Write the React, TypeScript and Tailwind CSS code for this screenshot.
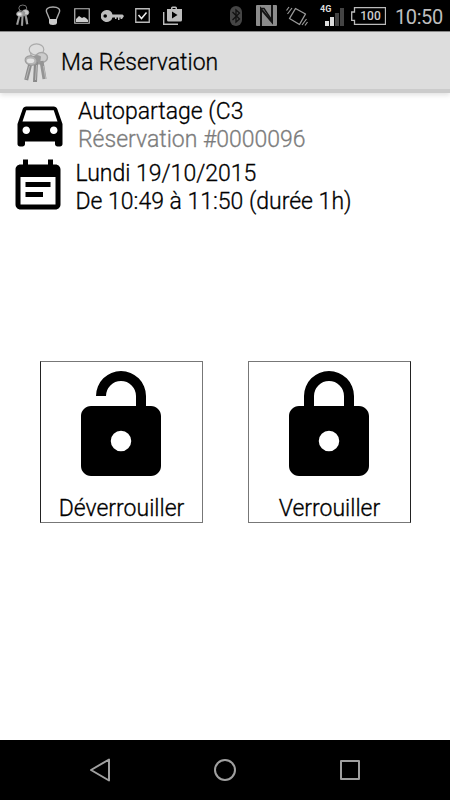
import React from 'react';

interface IconProps {
  className?: string;
}

interface LockButtonProps {
  label: string;
  path: string;
  className?: string;
}

const LOCK_BODY =
  'M18 8H6c-1.1 0-2 .9-2 2v10c0 1.1.9 2 2 2h12c1.1 0 2-.9 2-2V10c0-1.1-.9-2-2-2zm-6 9.05a2.05 2.05 0 1 1 0-4.1 2.05 2.05 0 0 1 0 4.1z';
const OPEN_SHACKLE = 'M7 6a5 5 0 0 1 10 0v2.2h-2V6a3 3 0 0 0-6 0z';
const CLOSED_SHACKLE = 'M7 8.2V6a5 5 0 0 1 10 0v2.2h-2V6a3 3 0 0 0-6 0v2.2z';

function KeysIcon({ className }: IconProps) {
  return (
    <svg className={className} viewBox="0 0 26 42" fill="none">
      <ellipse cx="13.5" cy="7.5" rx="7.3" ry="5.6" stroke="#aaa" strokeWidth="1.2" />
      <path d="M7.5 10l1 6" stroke="#aaa" strokeWidth="1.2" />
      <ellipse cx="18.5" cy="15.5" rx="6" ry="5" fill="#ccc" stroke="#a5a5a5" strokeWidth="1.4" />
      <path d="M18.5 19l3 18" stroke="#949494" strokeWidth="4" />
      <path d="M20.5 24l2.2 13" stroke="#bbb" strokeWidth="1" />
      <path d="M7.5 21L3.2 38" stroke="#8d8d8d" strokeWidth="4" />
      <path d="M6.5 24L3 37" stroke="#b5b5b5" strokeWidth="1" />
      <path d="M10 14.5q4-3 8 0l-1 8h-6z" fill="#999" />
      <path d="M13 20l-1 20" stroke="#8a8a8a" strokeWidth="4" />
      <path d="M13.5 23l-1 15" stroke="#b8b8b8" strokeWidth="1" />
      <ellipse cx="8" cy="18.5" rx="6" ry="4.7" transform="rotate(15 8 18.5)" fill="#b5b5b5" stroke="#999" />
      <ellipse cx="7.5" cy="18.8" rx="3.8" ry="2.3" fill="#e2e2e2" />
    </svg>
  );
}

function StatusBar() {
  return (
    <header className="flex h-[31px] shrink-0 items-center bg-black text-[#bdbdbd]">
      <KeysIcon className="ml-[15px] h-[23px] w-[15px]" />
      <svg className="ml-[15px] h-5 w-4" viewBox="0 0 16 20" fill="none">
        <path d="M4.5 13L2 7C0 3 3 1 8 1s8 2 6 6l-2.5 6" stroke="#aaa" strokeWidth="1.4" />
        <path d="M4 13h8v3.5Q12 19 8 19t-4-2.5z" fill="#ccc" />
      </svg>
      <svg className="ml-[13px] h-4 w-4" viewBox="0 0 16 16">
        <path d="M.75.75h14.5v14.5H.75z" fill="none" stroke="#bbb" strokeWidth="1.2" />
        <path d="M2 14V11l3-3 3 2 2-1 2 1 2 2v2z" fill="#ccc" />
      </svg>
      <svg className="ml-[11px] h-3 w-[23px]" viewBox="0 0 23 12" fill="#bdbdbd">
        <path fillRule="evenodd" d="M6 0a6 6 0 1 0 5.5 7.5H14V9h1.5V7.5H17V10h1.5V7.5h1V9H21l2-3-1.5-1.5h-10A6 6 0 0 0 6 0zM4.2 4.2a1.8 1.8 0 1 1 0 3.6 1.8 1.8 0 0 1 0-3.6z" />
      </svg>
      <svg className="ml-[11px] h-[15px] w-[15px]" viewBox="0 0 15 15" fill="none">
        <path d="M.75.75h13.5v13.5H.75z" stroke="#bbb" strokeWidth="1.3" />
        <path d="M3.5 7l3 3.5 5-6" stroke="#eee" strokeWidth="1.5" />
      </svg>
      <svg className="-mt-px ml-[13px] h-[19px] w-[19px]" viewBox="0 0 19 19" fill="#bdbdbd">
        <path fillRule="evenodd" d="M4 3h4V2q0-1.5 1.5-1.5h3Q14 .5 14 2v1h5v11q0 1.5-1.5 1.5h-12Q4 15.5 4 14zM9.5 3h3V2h-3zM9 5.5v7l5.5-3.5z" />
        <path d="M.7 6v12.2H15" fill="none" stroke="#bbb" strokeWidth="1.4" />
      </svg>

      <svg className="ml-[48px] h-5 w-3" viewBox="0 0 12 20">
        <rect width="12" height="20" rx="6" fill="#454545" />
        <path d="M2.5 6l7 7L6 16V4l3.5 3-7 7" fill="none" stroke="#111" strokeWidth="1.3" />
      </svg>
      <svg className="ml-3.5 h-[21px] w-[21px]" viewBox="0 0 21 21">
        <rect width="21" height="21" rx="1" fill="#8c8c8c" />
        <path d="M5 21V4l11 13V0" fill="none" stroke="#151515" strokeWidth="2" />
        <path d="M5 3.5h3l8 12" fill="none" stroke="#151515" strokeWidth="1.5" />
      </svg>
      <svg className="ml-[9px] h-[22px] w-[22px]" viewBox="0 0 22 22" fill="none" stroke="#999">
        <path d="M9.5 3.5L19.5 9l-6 10.5-10-6z" strokeWidth="1.4" strokeLinejoin="round" />
        <path d="M1.5 9l4.5-6M.5 5.5L3 2M16 20l4.5-6M19 20.5l2.5-3.5" strokeWidth="1.2" />
      </svg>
      <div className="ml-3 flex h-[22px] w-[26px] items-start">
        <span className="w-[11px] text-[9px] leading-[9px] font-bold text-[#ddd]">4G</span>
        <svg className="mt-[3px] -ml-[7px] h-[18px] w-5 shrink-0" viewBox="0 0 20 18">
          <path d="M1 13h4v5H1zM6 9h4v9H6z" fill="#ddd" />
          <path d="M11 5h4v13h-4zM16 0h4v18h-4z" fill="#444" />
        </svg>
      </div>
      <div className="relative ml-[5px] flex h-[18px] w-[35px] items-center justify-center">
        <svg className="absolute inset-0 h-full w-full" viewBox="0 0 35 18" fill="none">
          <path d="M3.5.7h31v16.6h-31v-4H.7V5h2.8z" stroke="#bbb" strokeWidth="1.3" />
        </svg>
        <span className="relative ml-1 text-[12px] leading-none font-medium text-[#ccc]">100</span>
      </div>
      <span className="mt-[3px] ml-[9px] text-[20px] leading-none tracking-[-0.4px] text-[#bebebe]">10:50</span>
    </header>
  );
}

function LockButton({ label, path, className = '' }: LockButtonProps) {
  return (
    <button className={`flex h-[162px] w-[163px] flex-col items-center border border-[#777] bg-white ${className}`}>
      <svg className="mt-1 mr-px h-[120px] w-[120px] shrink-0" viewBox="0 0 24 24" fill="#000">
        <path d={path} />
        <path d={LOCK_BODY} />
      </svg>
      <span className="mt-[9px] text-[23px] leading-[28px] font-light whitespace-nowrap [-webkit-text-stroke:0.3px]">{label}</span>
    </button>
  );
}

export default function App() {
  return (
    <div className="flex h-[800px] w-[450px] flex-col overflow-hidden bg-white font-['Roboto',sans-serif] text-black">
      <StatusBar />

      {/* Action bar */}
      <div className="flex h-[62px] shrink-0 items-center border-t border-b-4 border-t-[#888] border-b-[#cbcbcb] bg-[#ddd] shadow-[0_2px_5px_rgba(0,0,0,0.12)]">
        <KeysIcon className="mt-1 ml-[23px] h-[42px] w-[26px]" />
        <h1 className="mt-1 ml-3 text-[23px] leading-none font-light whitespace-nowrap [-webkit-text-stroke:0.3px]">Ma Réservation</h1>
      </div>

      <main className="flex grow flex-col">
        {/* Booking details */}
        <section className="flex h-[61px] pt-[3px] pl-2.5">
          <svg className="-mt-0.5 h-[60px] w-[60px] shrink-0" viewBox="0 0 24 24">
            <path d="M18.92 6.01C18.72 5.42 18.16 5 17.5 5h-11c-.66 0-1.21.42-1.42 1.01L3 12v8c0 .55.45 1 1 1h1c.55 0 1-.45 1-1v-1h12v1c0 .55.45 1 1 1h1c.55 0 1-.45 1-1v-8l-2.08-5.99zM6.5 16c-.83 0-1.5-.67-1.5-1.5S5.67 13 6.5 13s1.5.67 1.5 1.5S7.33 16 6.5 16zm11 0c-.83 0-1.5-.67-1.5-1.5s.67-1.5 1.5-1.5 1.5.67 1.5 1.5-.67 1.5-1.5 1.5zM5 11l1.5-4.5h11L19 11H5z" />
          </svg>
          <div className="mt-0.5 ml-2 text-[23px] leading-[28px] font-light whitespace-nowrap [-webkit-text-stroke:0.3px]">
            <p>Autopartage (C3</p>
            <p className="text-[#7c7c7c]">Réservation #0000096</p>
          </div>
        </section>
        <section className="flex h-[64px] pt-[5px] pl-[7.5px]">
          <svg className="-mt-0.5 h-[60px] w-[60px] shrink-0" viewBox="0 0 24 24">
            <path d="M17 10H7v2h10v-2zm2-7h-1V1h-2v2H8V1H6v2H5c-1.11 0-1.99.9-1.99 2L3 19c0 1.1.89 2 2 2h14c1.1 0 2-.9 2-2V5c0-1.1-.9-2-2-2zm0 16H5V8h14v11zm-5-5H7v2h7v-2z" />
          </svg>
          <div className="mt-px ml-2 text-[23px] leading-[28px] font-light whitespace-nowrap [-webkit-text-stroke:0.3px]">
            <p>Lundi 19/10/2015</p>
            <p>De 10:49 à 11:50 (durée 1h)</p>
          </div>
        </section>

        {/* Door controls */}
        <section className="mt-[143px] flex gap-[45px] pl-10">
          <LockButton label="Déverrouiller" path={OPEN_SHACKLE} className="border-l-[#222]" />
          <LockButton label="Verrouiller" path={CLOSED_SHACKLE} className="border-r-[#222]" />
        </section>
      </main>

      <nav className="flex h-[60px] shrink-0 items-center bg-black pl-[88px]">
        <svg className="h-6 w-6" viewBox="0 0 24 24" fill="none" stroke="#a0a0a0" strokeWidth="2" strokeLinejoin="round">
          <path d="M3 12L21 1.5v21z" />
        </svg>
        <svg className="ml-[101px] h-6 w-6" viewBox="0 0 24 24" fill="none" stroke="#a0a0a0" strokeWidth="2">
          <circle cx="12" cy="12" r="10" />
        </svg>
        <svg className="ml-[101px] h-6 w-6" viewBox="0 0 24 24" fill="none" stroke="#a0a0a0" strokeWidth="2" strokeLinejoin="round">
          <path d="M3 3h18v18H3z" />
        </svg>
      </nav>
    </div>
  );
}
